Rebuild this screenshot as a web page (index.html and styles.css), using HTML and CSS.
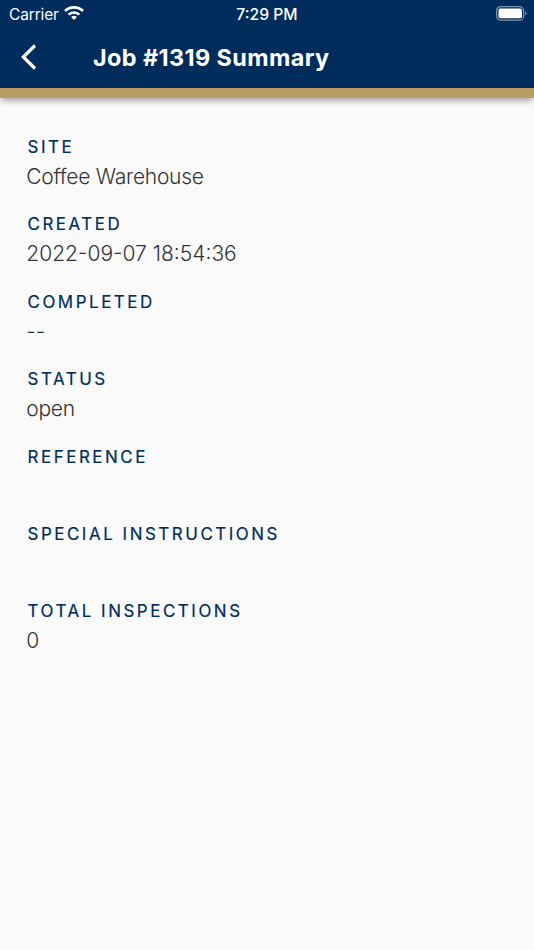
FILE: index.html
```html
<!DOCTYPE html>
<html lang="en">
<head>
<meta charset="utf-8">
<title>Job #1319 Summary</title>
<link rel="stylesheet" href="styles.css">
</head>
<body>
<header class="header">
  <div class="status">
    <div class="carrier"><span>Carrier</span>
      <svg class="wifi" viewBox="0 0 20 14"><path d="M10 14l2.9-2.9a4.3 4.3 0 0 0-5.8 0z"/><path d="M4.6 8.6a7.8 7.8 0 0 1 10.8 0M1 5a13 13 0 0 1 18 0" class="arc"/></svg>
    </div>
    <div class="time">7:29 PM</div>
    <svg class="battery" viewBox="0 0 31 15"><rect class="shell" x=".6" y=".6" width="27" height="13.6" rx="4"/><rect x="2.5" y="2.4" width="23.5" height="9.8" rx="1.8"/><path class="tip" d="M29.2 5q2.6 2.2 0 4.6z"/></svg>
  </div>
  <div class="nav">
    <svg class="back" viewBox="0 0 16 26"><path d="M14 1.5L2.3 13L14 24.5"/></svg>
    <h1 class="title">Job #1319 Summary</h1>
  </div>
</header>
<main class="details">
  <section class="field"><h2>SITE</h2><p class="name">Coffee Warehouse</p></section>
  <section class="field"><h2>CREATED</h2><p>2022-09-07 18:54:36</p></section>
  <section class="field"><h2>COMPLETED</h2><p>--</p></section>
  <section class="field"><h2>STATUS</h2><p class="name">open</p></section>
  <section class="field"><h2>REFERENCE</h2><p></p></section>
  <section class="field"><h2>SPECIAL INSTRUCTIONS</h2><p></p></section>
  <section class="field"><h2>TOTAL INSPECTIONS</h2><p>0</p></section>
</main>
</body>
</html>
```
FILE: styles.css
```css
* { box-sizing: border-box; }
body { margin: 0; min-height: 950px; background: #fafafa; font-family: Inter, sans-serif; }
.header { height: 98px; background: #002c5c; border-bottom: 10px solid #b99d65; box-shadow: 0 4px 6px -1px rgba(0,0,0,.33); color: #fff; }
.status { height: 28px; display: grid; grid-template-columns: 1fr auto 1fr; align-items: center; padding: 0 7px 0 9px; font-size: 16px; }
.carrier { display: flex; align-items: center; gap: 5px; font-size: 15.5px; letter-spacing: -.15px; }
.wifi { width: 20px; height: 14px; margin-top: -2px; fill: #fff; }
.arc { fill: none; stroke: #fff; stroke-width: 2.6; }
.time { font-weight: 500; font-size: 15.7px; margin-left: -2px; }
.battery { width: 31px; height: 15px; margin-top: -1px; fill: #fff; justify-self: end; }
.shell { fill: none; stroke: #8295ad; stroke-width: 1.2; }
.tip { fill: #8295ad; }
.nav { height: 60px; display: flex; align-items: center; padding-left: 21px; padding-bottom: 2px; }
.back { width: 16px; height: 26px; fill: none; stroke: #fff; stroke-width: 3.3; }
.title { margin: 1px 0 0 56px; font-size: 23.4px; font-weight: 700; letter-spacing: .4px; }
.details { padding: 37px 26px; }
.field { height: 77.4px; }
.field h2 { margin: 0 0 0 1.5px; font-size: 16.9px; line-height: 24px; font-weight: 400; letter-spacing: 2.56px; color: #002c5c; -webkit-text-stroke: .2px #002c5c; }
.field p { margin: 4px 0 0 .3px; font-size: 21px; line-height: 28px; font-weight: 300; color: #333; }
.field .name { letter-spacing: -.27px; }
```
